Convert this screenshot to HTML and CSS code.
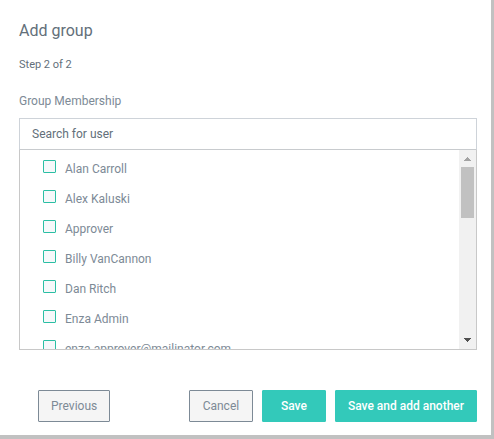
FILE: index.html
```html
<!DOCTYPE html>
<html lang="en">
<head>
<meta charset="utf-8">
<title>Add group</title>
<link rel="stylesheet" href="styles.css">
</head>
<body>
<form class="dialog">
  <h1 class="title">Add group</h1>
  <p class="step">Step 2 of 2</p>
  <label class="field-label" for="search">Group Membership</label>
  <input class="search" id="search" type="text" placeholder="Search for user">
  <div class="picker">
    <ul class="users">
      <li><label class="user"><input class="check" type="checkbox"><span>Alan Carroll</span></label></li>
      <li><label class="user"><input class="check" type="checkbox"><span>Alex Kaluski</span></label></li>
      <li><label class="user"><input class="check" type="checkbox"><span>Approver</span></label></li>
      <li><label class="user"><input class="check" type="checkbox"><span>Billy VanCannon</span></label></li>
      <li><label class="user"><input class="check" type="checkbox"><span>Dan Ritch</span></label></li>
      <li><label class="user"><input class="check" type="checkbox"><span>Enza Admin</span></label></li>
      <li><label class="user"><input class="check" type="checkbox"><span>enza.approver@mailinator.com</span></label></li>
    </ul>
    <div class="scrollbar" aria-hidden="true">
      <svg class="arrow arrow-up" width="17" height="17" viewBox="0 0 17 17" shape-rendering="crispEdges"><path d="M8 7h1v1h1v1h1v1h1v1H5v-1h1V9h1V8h1z"/></svg>
      <div class="thumb"></div>
      <svg class="arrow arrow-down" width="17" height="17" viewBox="0 0 17 17" shape-rendering="crispEdges"><path d="M5 6h7v1h-1v1h-1v1H9v1H8V9H7V8H6V7H5z"/></svg>
    </div>
  </div>
  <div class="actions">
    <button class="button button-plain previous" type="button">Previous</button>
    <button class="button button-plain" type="button">Cancel</button>
    <button class="button button-primary" type="submit">Save</button>
    <button class="button button-primary" type="submit">Save and add another</button>
  </div>
</form>
</body>
</html>
```
FILE: styles.css
```css
* {
  box-sizing: border-box;
}

body {
  margin: 0;
  background: #fff;
  color: #636f7a;
  font: 12px/16px Roboto, sans-serif;
}

.dialog {
  display: flex;
  flex-direction: column;
  min-height: 100vh;
  padding: 21px 14px 12px 19px;
  border-right: 3px solid #c1c1c1;
  border-bottom: 4px solid #c1c1c1;
}

.title {
  margin: 0 0 16px;
  font-size: 16px;
  font-weight: 400;
  line-height: 20px;
}

.step {
  margin: 0 0 20px;
  font-size: 11px;
}

.field-label {
  margin-bottom: 9px;
  color: #7d8a96;
}

.search {
  width: 100%;
  height: 32px;
  padding: 0 12px;
  border: 1px solid #ced3d9;
  border-bottom-color: #c8cbce;
  border-radius: 0;
  background: #fff;
  color: #636f7a;
  font: inherit;
  outline: none;
}

.search::placeholder {
  color: #636f7a;
  opacity: 1;
}

.picker {
  display: flex;
  height: 200px;
  border: 1px solid #c8c8c8;
  border-top: 0;
}

.users {
  flex: 1;
  margin: 0;
  padding: 4px 0 0 23px;
  overflow: hidden;
  list-style: none;
}

.user {
  display: flex;
  align-items: center;
  gap: 9px;
  height: 30px;
  color: #7d8a96;
}

.check {
  -webkit-appearance: none;
  appearance: none;
  width: 13px;
  height: 13px;
  margin: 0 0 5px;
  border: 1px solid #2bbfa4;
  border-radius: 1px;
  background: #f6f8fa;
}

.check:checked {
  background: #33c9ba;
}

.scrollbar {
  display: flex;
  flex-direction: column;
  width: 17px;
  background: #f1f1f1;
}

.arrow-up {
  fill: #a3a3a3;
}

.arrow-down {
  margin-top: auto;
  fill: #505050;
}

.thumb {
  height: 51px;
  margin: 0 2px;
  background: #c1c1c1;
}

.actions {
  display: flex;
  gap: 9px;
  margin-top: 40px;
  padding-left: 19px;
}

.button {
  min-width: 64px;
  height: 32px;
  padding: 0 12px;
  border: 1px solid;
  border-radius: 1px;
  font: inherit;
  white-space: nowrap;
}

.button-plain {
  border-color: #7d8a96;
  background: #f5f5f5;
  color: #7d8a96;
}

.button-primary {
  border-color: #33c9ba;
  background: #33c9ba;
  color: #fff;
  font-weight: 500;
}

.previous {
  margin-right: auto;
}
```
